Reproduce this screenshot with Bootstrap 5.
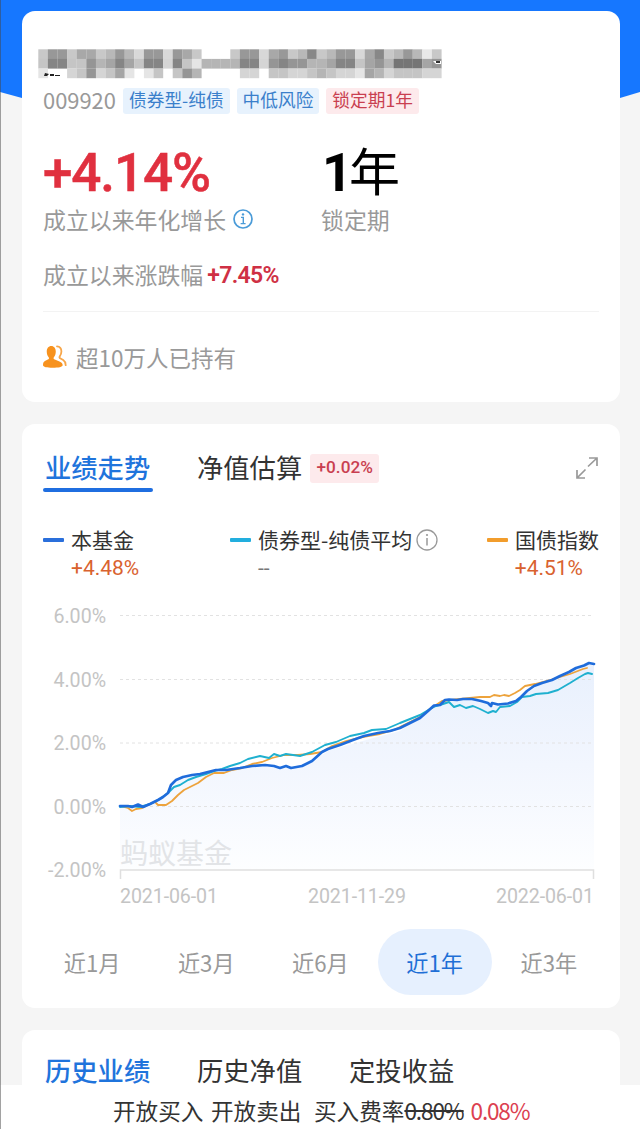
<!DOCTYPE html>
<html lang="zh-CN">
<head>
<meta charset="utf-8">
<meta name="viewport" content="width=device-width, initial-scale=1">
<title>基金详情</title>
<link href="https://cdn.jsdelivr.net/npm/bootstrap@5.3.0/dist/css/bootstrap.min.css" rel="stylesheet">
<style>
body{background:#f5f5f5;font-family:"Noto Sans CJK SC",sans-serif;color:#333;height:1129px;overflow:hidden}
.screen{width:640px;height:1129px;overflow:hidden;padding:11px 20px 0 22px}
.sky{top:0;left:0;width:640px;height:98px;background:#1677ff;clip-path:polygon(0 0,100% 0,100% 92px,620px 98px,22px 98px,0 92px)}
.edge{top:0;left:0;width:1px;height:1129px;background:rgba(70,70,70,.5)}
.panel{background:#fff;border:0;border-radius:13px;padding:0 21px;position:relative}
.p1{height:391px;margin-bottom:22px}
.p2{height:584px;margin-bottom:22px}
.p3{height:120px}
.rowx{display:flex;align-items:center;white-space:nowrap;line-height:1}
.cjk{padding-bottom:2px}
.gray{color:#999}
.tag{height:26px;font-size:17.7px;padding:0 6px 1px;border-radius:3px;display:flex;align-items:center;line-height:1}
.tag-b{background:#e7f2fd;color:#3a7fcb}
.tag-r{background:#fdeaec;color:#c93f50}
.rb{font-family:Roboto,sans-serif}
.big{font-size:53px;font-weight:500;color:#e0303f;letter-spacing:-1.1px;-webkit-text-stroke:.5px #e0303f}
.tab{font-size:26.3px}
.act{color:#1f74dc;font-weight:500}
.bar{height:4px;width:110px;border-radius:2px;background:#1f6ee0}
.dash{width:21px;height:4px;border-radius:1px;margin-right:7px}
.leg{font-size:21px}
.val{font-size:21px;color:#d9622f;padding-left:28px}
.period{width:114.2px;height:66px;font-size:22.2px;color:#999;display:flex;align-items:center;justify-content:center;line-height:1}
.period.on{background:#e6f0fe;border-radius:33px;color:#1f6fd6}
.foot{left:0;top:1085px;width:640px;height:44px;background:#fff;font-size:22.6px;padding:8px 0 0 113px}
</style>
</head>
<body>
<div class="screen position-relative">
  <div class="sky position-absolute"></div>

  <section class="card panel p1">
    <svg id="mask" width="450" height="50" viewBox="36 36 450 50" style="margin:25px 0 0 -7px"></svg>
    <div class="rowx" style="height:29px">
      <span class="gray" style="font-size:21.9px;width:80px;padding-bottom:2px">009920</span>
      <span class="tag tag-b">债券型-纯债</span>
      <span class="tag tag-b" style="margin-left:7px">中低风险</span>
      <span class="tag tag-r" style="margin-left:7px">锁定期1年</span>
    </div>
    <div class="rowx" style="height:58px;margin-top:29px">
      <span class="rb big" style="width:281px">+4.14%</span>
      <span class="rb text-black" style="font-size:53px;font-weight:700;width:27px;margin-left:-2px">1</span>
      <span class="text-black" style="font-size:51px;font-weight:400;padding-bottom:7px">年</span>
    </div>
    <div class="rowx gray cjk" style="height:36px;font-size:22.9px">
      <span style="width:190px">成立以来年化增长</span>
      <svg width="20" height="20" viewBox="0 0 20 20" fill="none" stroke="#4a9bd8" stroke-width="1.7"><circle cx="10" cy="10" r="9"/><path d="M8 8.4h2.3v6M7.6 14.6h5" stroke-width="1.4"/><circle cx="10" cy="5.4" r="1.2" fill="#4a9bd8" stroke="none"/></svg>
      <span style="margin-left:68px">锁定期</span>
    </div>
    <div class="rowx gray" style="height:36px;font-size:22.9px;margin-top:19px">
      <span class="cjk">成立以来涨跌幅</span>
      <span class="rb" style="font-weight:600;color:#cf3044;font-size:23px;letter-spacing:-.65px;margin-left:4px">+7.45%</span>
    </div>
    <div style="height:1px;background:#f3f3f3;margin-top:18px"></div>
    <div class="rowx gray" style="height:36px;font-size:22.5px;margin-top:28px">
      <svg width="25" height="24" viewBox="0 0 25 24" style="margin-top:-2px"><path d="M9.5 1c3.2 0 5.200 2.300 5.200 5.600 0 2.600-1 4.600-2.400 5.900-.5.9.1 1.600 1.300 2.100l5.300 1.800c2.500.9 3.700 2 3.700 3.800 0 1.700-4.900 2.500-11.500 2.500S0 21.900 0 20.200c0-2.200.7-3.500 2.200-4.200l3.300-1.400c1.200-.5 1.700-1.200 1.200-2.100C5.200 11.200 4.300 9.200 4.300 6.600 4.300 3.300 6.300 1 9.500 1z" fill="#f7921e" transform="scale(.87 1)"/><path d="M14 1.400c2.900.2 4.400 2.300 4.400 5 0 2.100-.8 3.600-1.700 5-.5.9-.1 1.600.8 2.100l2.700 1.600c1.700 1.100 2.400 2.700 2.500 5.100" fill="none" stroke="#f7a64a" stroke-width="1.800" stroke-linecap="round"/></svg>
      <span class="cjk" style="margin-left:8px">超10万人已持有</span>
    </div>
  </section>

  <section class="card panel p2">
    <div class="rowx" style="height:40px;margin-top:24px">
      <span class="tab act cjk" style="margin-left:2px;width:152px">业绩走势</span>
      <span class="tab cjk">净值估算</span>
      <span class="rb d-flex align-items-center justify-content-center" style="margin-left:8px;width:69px;height:29px;background:#fdeaec;color:#c93f50;font-size:17.2px;font-weight:500;border-radius:3px">+0.02%</span>
      <svg class="ms-auto" width="24" height="24" viewBox="0 0 24 24" fill="none" stroke="#999" stroke-width="1.700"><path d="M13 10.500L22 2M14 2h8v8M10.500 13.500L2 22M2 14v8h8"/></svg>
    </div>
    <div class="bar"></div>
    <div class="rowx leg" style="height:30px;margin-top:33px">
      <span class="dash" style="background:#2a6fdb"></span><span class="cjk" style="width:159px">本基金</span>
      <span class="dash" style="background:#22aede"></span><span class="cjk">债券型-纯债平均</span>
      <svg style="margin-left:4px" width="22" height="22" viewBox="0 0 22 22" fill="none" stroke="#999" stroke-width="1.300"><circle cx="11" cy="11" r="10"/><path d="M11 9v7.500" stroke-width="1.500"/><circle cx="11" cy="6" r="1.100" fill="#999" stroke="none"/></svg>
      <span class="dash ms-auto" style="background:#f29d2c"></span><span class="cjk">国债指数</span>
    </div>
    <div class="rowx rb val" style="height:26px">
      <span style="width:187px">+4.48%</span>
      <span style="color:#777;font-size:21px">--</span>
      <span class="ms-auto" style="margin-right:16px">+4.51%</span>
    </div>
    <svg width="598" height="325" viewBox="22 585 598 325" style="margin:4px 0 0 -21px" font-family="Roboto,sans-serif" font-size="19.6" fill="#c4c4c4">
      <defs><linearGradient id="wash" x1="0" y1="660" x2="0" y2="870" gradientUnits="userSpaceOnUse"><stop offset="0" stop-color="#e8f0fd"/><stop offset=".5" stop-color="#f2f6fe"/><stop offset="1" stop-color="#fdfeff"/></linearGradient></defs>
      <path d="M120 806L136 804 150 804 168 793 180 778 214 770 264 765 293 767 312 761 330 750 366 740 400 731 434 706 445 699 480 699 492 706 514 702 540 684 570 671 594 663V870H120z" fill="url(#wash)"/>
      <path d="M120 615.500H594M120 679.500H594M120 743H594M120 806.500H594" stroke="#e2e2e2" stroke-dasharray="3 3"/>
      <path d="M120.500 879V870H593.500V879" fill="none" stroke="#dfdfdf" stroke-width="1.500"/>
      <text x="120" y="864" font-family="Noto Sans CJK SC,sans-serif" font-size="28" fill="#e2e4e7">蚂蚁基金</text>
      <g text-anchor="end"><text x="106" y="622.500">6.00%</text><text x="106" y="686.500">4.00%</text><text x="106" y="750">2.00%</text><text x="106" y="813.500">0.00%</text><text x="106" y="877">-2.00%</text></g>
      <text x="120" y="903" textLength="98">2021-06-01</text><text x="308" y="903" textLength="98">2021-11-29</text><text x="496" y="903" textLength="98">2022-06-01</text>
      <g fill="none" stroke-linejoin="round" stroke-linecap="round">
        <path stroke="#eda33c" stroke-width="1.800" d="M120 806L128 808 132 811 136 809 142 808 150 804 155 802M156 803L158 805 166 805 172 801 178 795 184 790 190 787 198 783 206 777 214 773 224 773 232 770 242 768 252 764 262 762 272 758 284 755 298 755 310 754 322 752 332 746 346 741 358 738 368 736 380 734 394 730 410 722 420 717 430 709 442 701 460 699 480 697 490 697 494 695 500 696 504 695 509 696 515 693 520 690 525 686 535 684 550 680 570 674 583 669 587 668"/>
        <path stroke="#1fb0cf" stroke-width="1.900" d="M120 807L130 806 140 807 150 804 160 799 168 793 174 787 180 785 188 780 196 777 206 774 214 771 222 769 230 766 240 763 248 759 260 756 269 758 274 754 280 756 286 754 300 756 312 752 325 745 336 742 350 736 364 733 372 730 386 729 400 723 410 719 420 715 430 709 436 706 443 704 449 702 454 707 460 705 466 708 473 706 480 709 488 713 493 711 496 712 500 707 510 706 517 702 522 697 530 696 536 694 548 693 558 690 570 683 578 678 585 674 588 673 592 674"/>
        <path stroke="#1f6cdb" stroke-width="2.700" d="M120 806L128 806 132 807 138 804.500 143 807 150 804 158 800 163 797 168 793 171 785 176 780 183 777 192 775 200 774 208 772 216 770 226 770 240 768 252 766 265 765 274 766 280 768 286 766 291 768 302 766 312 761 322 752 328 749 340 745 353 740 364 736 378 733 390 731 400 728 410 723 420 718 428 711 434 705.500 440 705 445 700 449 699.500 457 700 463 699 472 699 481 701 488 703 491 706 492 703 498 704.500 508 703.500 516 701 521 697 527 691 534 686 542 683 552 680 560 676 569 672 576 668 584 665.500 589 663 594 664"/>
      </g>
    </svg>
    <div class="d-flex" style="margin:19px -8px 0"><span class="period">近1月</span><span class="period">近3月</span><span class="period">近6月</span><span class="period on">近1年</span><span class="period">近3年</span></div>
  </section>

  <section class="card panel p3">
    <div class="rowx tab cjk" style="height:40px;margin-top:21px"><span class="act" style="margin-left:2px;width:152px">历史业绩</span><span style="width:152px">历史净值</span><span>定投收益</span></div>
  </section>

  <div class="foot rowx position-absolute">
    <span style="width:98px">开放买入</span><span style="width:103px">开放卖出</span><span>买入费率</span><span style="letter-spacing:-1.1px;text-decoration:line-through;margin-right:7px">0.80%</span><span style="letter-spacing:-1.2px;color:#dc4050">0.08%</span>
  </div>
  <div class="edge position-absolute"></div>
</div>
<script src="https://cdn.jsdelivr.net/npm/bootstrap@5.3.0/dist/js/bootstrap.bundle.min.js"></script>
<script>
// pixelated fund name: one hex digit of grey per cell
const rows = ["c99caacb9bd99d9acfffc99da9cb8cb99da8cb9bec",
              "c88cc9ba8ac88d8cebbbb88d9899bba88ca9b777a9",
              "effdc9dcaefecfc9bffffddfccddcbcddeabdcccdd"];
let s = '';
rows.forEach((r, j) => [...r].forEach((c, i) => {
  if (c !== "f") s += `<rect x="${38.3 + i * 9.6}" y="${49.3 + j * 9.6}" width="9.7" height="9.7" fill="#${c}${j ? 5 : 8}${c}${j ? 5 : 8}${c}${j ? 5 : 8}"/>`;
}));
s += '<path d="M45 73l4 1-2 2h-3zM50 74h4v2h-4zM55 75h5v1h-5z" fill="#222"/><path d="M433 61h8v3h-5z" fill="#fff"/><path d="M436 61h4v2h-4z" fill="#333"/>';
document.getElementById("mask").innerHTML = s;
</script>
</body>
</html>
